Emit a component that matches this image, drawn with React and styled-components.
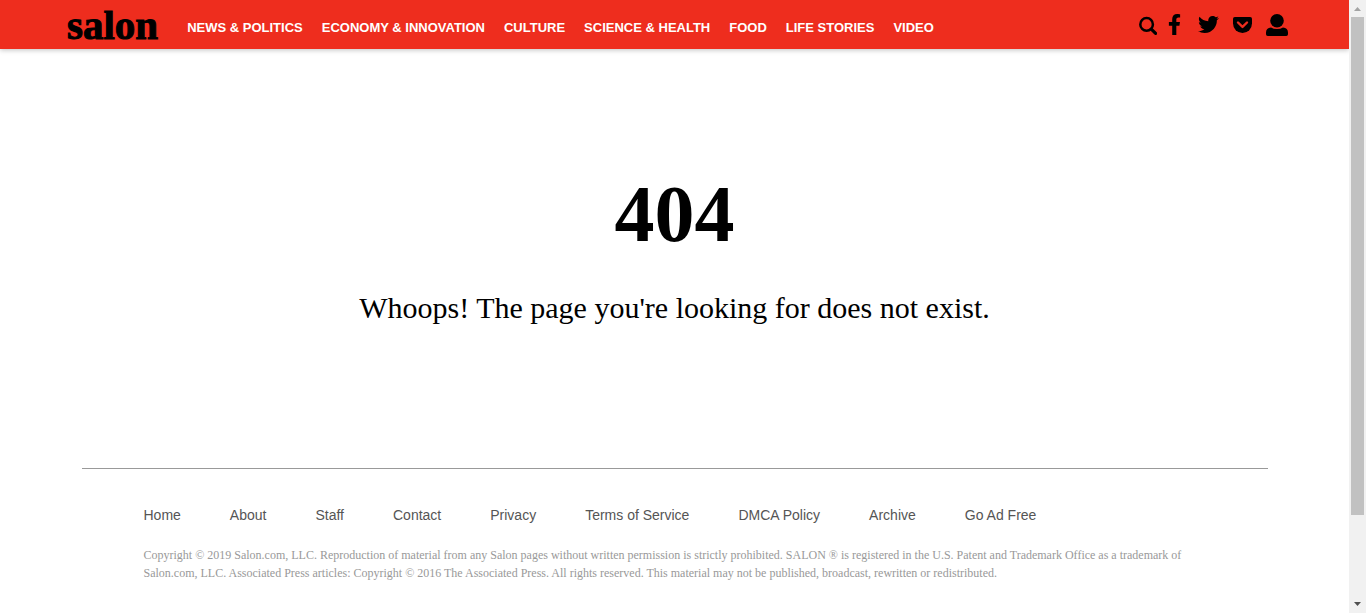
import React from "react";
import styled, { createGlobalStyle } from "styled-components";
import { FaFacebookF, FaTwitter } from "react-icons/fa";

const GlobalStyle = createGlobalStyle`
  *, *::before, *::after { box-sizing: border-box; }
  body { margin: 0; background: #fff; color: #000; font-family: "Liberation Serif", "Times New Roman", serif; }
`;

const Shell = styled.div`
  display: flex;
  min-height: 100vh;
`;

const Page = styled.div`
  flex: 1;
  min-width: 0;
`;

const Header = styled.header`
  display: flex;
  align-items: center;
  height: 49px;
  padding: 0 61px 0 67px;
  background: #ee2d1e;
  box-shadow: 0 1px 5px rgba(0, 0, 0, 0.25);
`;

const Logo = styled.a`
  font-size: 41px;
  font-weight: 700;
  line-height: 48px;
  color: #000;
  text-decoration: none;
  -webkit-text-stroke: 1px #000;
`;

const Nav = styled.nav`
  display: flex;
  gap: 19px;
  margin-left: 29px;
  padding-top: 6px;
`;

const NavLink = styled.a`
  font: 700 13px/16px "Liberation Sans", Arial, sans-serif;
  color: #fff;
  text-decoration: none;
  white-space: nowrap;
`;

const Tools = styled.div`
  display: flex;
  align-items: center;
  margin-left: auto;
`;

const IconButton = styled.button`
  display: flex;
  padding: 0;
  border: 0;
  background: none;
  color: #000;
  cursor: pointer;
`;

const Social = styled.div`
  display: flex;
  align-items: center;
  margin-right: 7px;
`;

const SocialLink = styled.a`
  display: flex;
  justify-content: center;
  width: 34px;
  color: #000;
`;

const Main = styled.main`
  padding: 119px 20px 140px;
  text-align: center;
`;

const Code = styled.h1`
  margin: 0;
  font-size: 80px;
  line-height: 92px;
`;

const Message = styled.p`
  margin: 28px 0 0;
  font-size: 30px;
  line-height: 40px;
`;

const Footer = styled.footer`
  max-width: 1186px;
  margin: 0 auto;
  padding: 38px 61px 0 62px;
  border-top: 1px solid #999;
`;

const FooterNav = styled.nav`
  display: flex;
  flex-wrap: wrap;
  column-gap: 49px;
`;

const FooterLink = styled.a`
  font: 14px/16px "Liberation Sans", Arial, sans-serif;
  color: #555;
  text-decoration: none;
`;

const Copyright = styled.p`
  margin: 23px 0 0;
  font-size: 12px;
  line-height: 18px;
  color: #999;
`;

const Scrollbar = styled.div`
  position: sticky;
  top: 0;
  display: flex;
  flex-direction: column;
  width: 17px;
  height: 100vh;
  background: #f1f1f1;
`;

const Arrow = styled.svg`
  display: block;
  width: 17px;
  height: 17px;
  flex: none;
`;

const Track = styled.div`
  flex: 1;
  padding: 0 2px;
`;

const Thumb = styled.div`
  height: 86%;
  background: #c1c1c1;
`;

const SearchIcon = () => (
  <svg width="18" height="21" viewBox="0 0 18 21" fill="none" stroke="currentColor">
    <circle cx="7.6" cy="10.400" r="6.300" strokeWidth="2.500" />
    <path d="M12.300 15.200 16.600 19.400" strokeWidth="3.200" strokeLinecap="round" />
  </svg>
);

const PocketIcon = () => (
  <svg width="19" height="16" viewBox="0 0 19 16">
    <path d="M1.800 0h15.400Q19 0 19 1.800v4.700a9.500 9.500 0 0 1-19 0V1.800Q0 0 1.800 0z" fill="currentColor" />
    <path d="M5 5.500l4.500 4.400L14 5.500" fill="none" stroke="#ee2d1e" strokeWidth="2.400" strokeLinecap="round" strokeLinejoin="round" />
  </svg>
);

const UserIcon = () => (
  <svg width="22" height="22" viewBox="0 0 22 22" fill="currentColor">
    <circle cx="11" cy="6.800" r="6.800" />
    <path d="M5 13.500Q0 14 0 18.500v1.800Q0 22 1.800 22h18.400q1.800 0 1.800-1.700v-1.800Q22 14 17 13.500 14.500 15 11 15T5 13.500z" />
  </svg>
);

const sections = ["NEWS & POLITICS", "ECONOMY & INNOVATION", "CULTURE", "SCIENCE & HEALTH", "FOOD", "LIFE STORIES", "VIDEO"];
const footerLinks = ["Home", "About", "Staff", "Contact", "Privacy", "Terms of Service", "DMCA Policy", "Archive", "Go Ad Free"];

export default function App() {
  return (
    <>
      <GlobalStyle />
      <Shell>
        <Page>
          <Header>
            <Logo href="#">salon</Logo>
            <Nav aria-label="Sections">
              {sections.map((name) => <NavLink href="#" key={name}>{name}</NavLink>)}
            </Nav>
            <Tools>
              <IconButton aria-label="Search"><SearchIcon /></IconButton>
              <Social>
                <SocialLink href="#" aria-label="Facebook"><FaFacebookF size={21} /></SocialLink>
                <SocialLink href="#" aria-label="Twitter"><FaTwitter size={21} /></SocialLink>
                <SocialLink href="#" aria-label="Pocket"><PocketIcon /></SocialLink>
              </Social>
              <IconButton aria-label="Account"><UserIcon /></IconButton>
            </Tools>
          </Header>
          <Main>
            <Code>404</Code>
            <Message>Whoops! The page you're looking for does not exist.</Message>
          </Main>
          <Footer>
            <FooterNav aria-label="Footer">
              {footerLinks.map((name) => <FooterLink href="#" key={name}>{name}</FooterLink>)}
            </FooterNav>
            <Copyright>
              Copyright © 2019 Salon.com, LLC. Reproduction of material from any Salon pages without written permission is strictly prohibited. SALON ® is registered in the U.S. Patent and Trademark Office as a trademark of Salon.com, LLC. Associated Press articles: Copyright © 2016 The Associated Press. All rights reserved. This material may not be published, broadcast, rewritten or redistributed.
            </Copyright>
          </Footer>
        </Page>
        <Scrollbar aria-hidden="true">
          <Arrow viewBox="0 0 17 17"><path d="M5 11h7L8.500 7z" fill="#a3a3a3" /></Arrow>
          <Track><Thumb /></Track>
          <Arrow viewBox="0 0 17 17"><path d="M5 6h7L8.500 10z" fill="#505050" /></Arrow>
        </Scrollbar>
      </Shell>
    </>
  );
}
